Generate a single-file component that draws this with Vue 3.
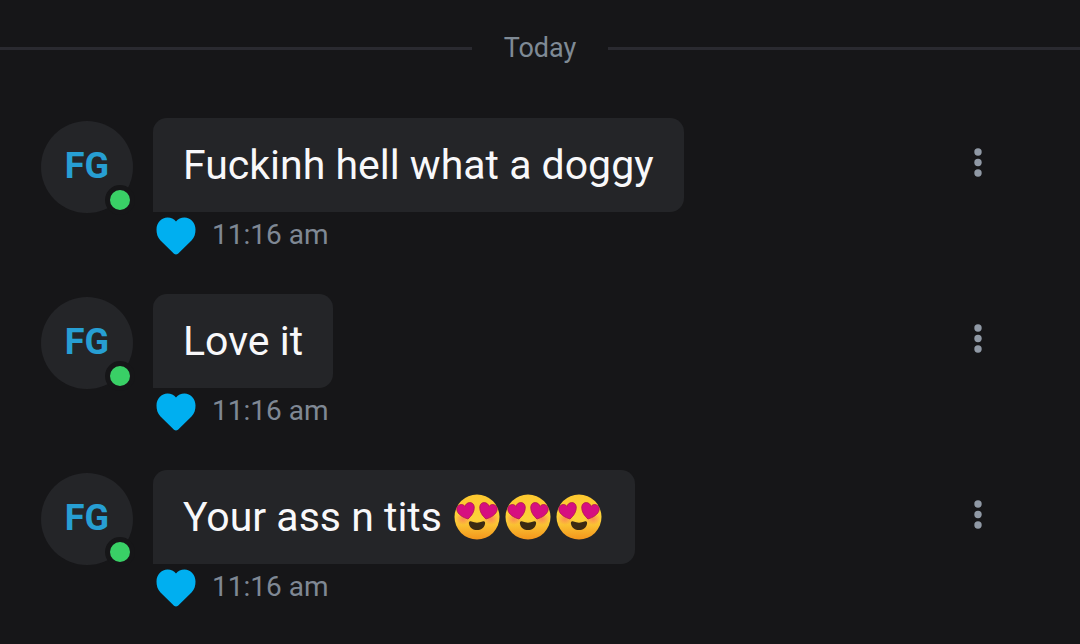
<script setup>
const messages = [
  { id: 1, text: 'Fuckinh hell what a doggy', faces: 0, time: '11:16 am' },
  { id: 2, text: 'Love it', faces: 0, time: '11:16 am' },
  { id: 3, text: 'Your ass n tits', faces: 3, time: '11:16 am' },
]
</script>

<template>
  <main class="chat">
    <svg class="defs" width="0" height="0" aria-hidden="true">
      <defs>
        <linearGradient id="face-fill" x1="0" y1="0" x2="0" y2="1">
          <stop offset="0" stop-color="#fdc82f" />
          <stop offset="0.55" stop-color="#fdd23a" />
          <stop offset="1" stop-color="#f3951c" />
        </linearGradient>
        <radialGradient id="blush">
          <stop offset="0" stop-color="#fb7a55" stop-opacity="0.8" />
          <stop offset="1" stop-color="#fb7a55" stop-opacity="0" />
        </radialGradient>
      </defs>
    </svg>

    <div class="day"><span>Today</span></div>

    <ul class="messages">
      <li v-for="m in messages" :key="m.id" class="message">
        <div class="avatar">
          FG
          <span class="online"></span>
        </div>
        <div class="body">
          <p class="bubble">
            <span>{{ m.text }}</span>
            <span v-if="m.faces" class="faces">
              <svg v-for="n in m.faces" :key="n" class="face" viewBox="0 0 46 46" role="img" aria-label="Smiling face with heart-eyes">
                <circle cx="23" cy="23" r="22.5" fill="url(#face-fill)" />
                <ellipse cx="9" cy="25" rx="8" ry="6" fill="url(#blush)" />
                <ellipse cx="37" cy="25" rx="8" ry="6" fill="url(#blush)" />
                <path d="M14 25C9 23.500 3.500 20.500 2.800 15.500C2.300 11 8.500 8.500 11 12.500C12 7.500 19.500 7 20.200 12.500C20.700 17.500 17.500 22 14 25Z" fill="#d60f80" stroke="#b0144c" stroke-width="0.8" />
                <path d="M32 25C37 23.500 42.500 20.500 43.200 15.500C43.700 11 37.500 8.500 35 12.500C34 7.500 26.500 7 25.800 12.500C25.300 17.500 28.500 22 32 25Z" fill="#d60f80" stroke="#b0144c" stroke-width="0.8" />
                <path d="M17.500 27.500C21 29 25 29 28.500 27.500C30.500 26.700 31.500 28 31 30C30 34 27 36 23 36S16 34 15 30C14.500 28 15.500 26.700 17.500 27.500Z" fill="#3b2a12" />
              </svg>
            </span>
          </p>
          <div class="meta">
            <button class="like" type="button" aria-label="Like">
              <svg viewBox="0 0 40 38" aria-hidden="true">
                <path d="M20 37.500C18.800 37.500 18 36.800 17 35.800L4.500 23.500C1.500 20.500 .5 16.500 .5 12.500C.5 5.500 5.500 .5 11.500 .5C15 .5 18 2 20 4.500C22 2 25 .5 28.500 .5C34.500 .5 39.500 5.500 39.500 12.500C39.500 16.500 38.500 20.500 35.500 23.500L23 35.800C22 36.800 21.200 37.500 20 37.500Z" fill="#00aff0" />
              </svg>
            </button>
            <time>{{ m.time }}</time>
          </div>
        </div>
        <button class="more" type="button" aria-label="Message options">
          <svg viewBox="0 0 8 30" aria-hidden="true">
            <circle cx="4" cy="4" r="3.700" />
            <circle cx="4" cy="14.500" r="3.700" />
            <circle cx="4" cy="25" r="3.700" />
          </svg>
        </button>
      </li>
    </ul>
  </main>
</template>

<style>
body {
  background: #161618;
}
</style>

<style scoped>
.chat {
  box-sizing: border-box;
  min-height: 100vh;
  padding-top: 30px;
  background: #161618;
  color: #f8f8fa;
  font-family: Roboto, "Liberation Sans", sans-serif;
}
.defs {
  position: absolute;
}
.day {
  display: flex;
  align-items: center;
  gap: 32px;
  color: #7f8a95;
  font-size: 27px;
  line-height: 36px;
}
.day::before,
.day::after {
  content: "";
  flex: 1;
  height: 3px;
  background: #2a2a30;
}
.messages {
  display: flex;
  flex-direction: column;
  gap: 40px;
  margin: 0;
  padding: 52px 92px 0 41px;
  list-style: none;
}
.message {
  display: flex;
  align-items: flex-start;
}
.avatar {
  position: relative;
  flex: none;
  width: 92px;
  height: 92px;
  margin: 3px 20px 0 0;
  border-radius: 50%;
  background: #242528;
  color: #279fd3;
  font-size: 36px;
  font-weight: 700;
  line-height: 90px;
  text-align: center;
}
.online {
  position: absolute;
  right: -2px;
  bottom: -2px;
  width: 20px;
  height: 20px;
  border: 5px solid #161618;
  border-radius: 50%;
  background: #39d066;
}
.body {
  flex: 1;
}
.bubble {
  display: flex;
  align-items: center;
  box-sizing: border-box;
  width: fit-content;
  min-height: 94px;
  margin: 0;
  padding: 0 30px;
  border-radius: 14px 14px 14px 0;
  background: #242528;
  font-size: 41px;
  line-height: 48px;
}
.faces {
  display: flex;
  gap: 5px;
  margin: 0 3px 0 12px;
}
.face {
  width: 46px;
  height: 46px;
}
.meta {
  display: flex;
  align-items: center;
  gap: 16px;
  height: 42px;
  padding: 0 3px;
  color: #7f8894;
  font-size: 28px;
  line-height: 36px;
}
time {
  padding-top: 4px;
}
button {
  padding: 0;
  border: 0;
  background: none;
  cursor: pointer;
}
button svg {
  display: block;
}
.like {
  margin-top: 6px;
}
.like svg {
  width: 40px;
  height: 38px;
}
.more {
  display: flex;
  justify-content: center;
  width: 20px;
  padding-top: 30px;
}
.more svg {
  width: 8px;
  height: 30px;
  fill: #9099a5;
}
</style>
